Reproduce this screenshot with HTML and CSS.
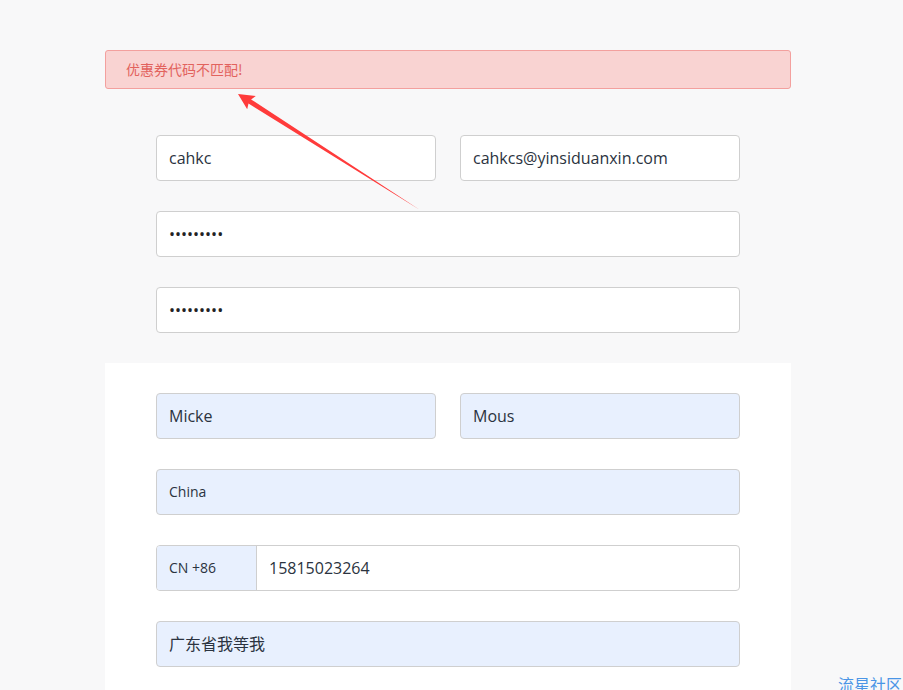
FILE: index.html
```html
<!DOCTYPE html>
<html lang="zh">
<head>
<meta charset="utf-8">
<title>Register</title>
<link rel="stylesheet" href="styles.css">
</head>
<body>
<div class="wrap">
  <div class="alert">优惠券代码不匹配!</div>
  <div class="section top">
    <div class="row two">
      <div class="field">cahkc</div>
      <div class="field">cahkcs@yinsiduanxin.com</div>
    </div>
    <div class="row"><div class="field pw">•••••••••</div></div>
    <div class="row"><div class="field pw">•••••••••</div></div>
  </div>
  <div class="section panel">
    <div class="row two">
      <div class="field fill">Micke</div>
      <div class="field fill">Mous</div>
    </div>
    <div class="row"><div class="field fill small">China</div></div>
    <div class="row">
      <div class="field phone">
        <span class="prefix">CN +86</span>
        <span class="num">15815023264</span>
      </div>
    </div>
    <div class="row"><div class="field fill">广东省我等我</div></div>
  </div>
</div>
<svg class="arrow" width="903" height="690" viewBox="0 0 903 690">
  <polygon points="238,94 255.8,95.9 251.1,99.4 420,210 248.5,103.6 247.2,109.3" fill="#ff3b3b"/>
</svg>
<div class="watermark">流星社区</div>
</body>
</html>
```
FILE: styles.css
```css
html, body {
  margin: 0;
  padding: 0;
  height: 100%;
  overflow: hidden;
}
body {
  background: #f8f8f9;
  font-family: "Open Sans", "Noto Sans CJK SC", sans-serif;
  color: #2b3340;
}
.wrap {
  width: 686px;
  margin-left: 105px;
  padding-top: 50px;
}
.alert {
  box-sizing: border-box;
  height: 39px;
  background: #f9d3d2;
  border: 1px solid #f3a09e;
  border-radius: 3px;
  color: #e2625d;
  font-size: 14px;
  line-height: 37px;
  padding-left: 20px;
  font-family: "Noto Sans CJK SC", sans-serif;
}
.section {
  display: flex;
  flex-direction: column;
  gap: 30px;
  padding: 0 51px;
}
.top {
  padding-top: 46px;
  padding-bottom: 30px;
}
.panel {
  background: #fff;
  padding-top: 30px;
  padding-bottom: 40px;
}
.row {
  display: flex;
  gap: 24px;
}
.row.two .field {
  flex: 1;
}
.field {
  box-sizing: border-box;
  flex: 1;
  height: 46px;
  border: 1px solid #cfcfcf;
  border-radius: 4px;
  background: #fff;
  padding-left: 12px;
  font-size: 16px;
  line-height: 44px;
  white-space: nowrap;
  overflow: hidden;
}
.field.fill {
  background: #e8f0fe;
}
.field.small {
  font-size: 14px;
}
.field.pw {
  font-size: 16px;
  letter-spacing: 0;
  color: #222;
}
.field.phone {
  display: flex;
  padding-left: 0;
}
.prefix {
  width: 100px;
  box-sizing: border-box;
  padding-left: 12px;
  background: #e8f0fe;
  border-right: 1px solid #cfcfcf;
  font-size: 14px;
}
.num {
  padding-left: 12px;
}
.arrow {
  position: absolute;
  left: 0;
  top: 0;
  pointer-events: none;
}
.watermark {
  position: absolute;
  left: 838px;
  top: 672px;
  font-size: 16px;
  color: #4a95e6;
  white-space: nowrap;
  font-family: "Noto Sans CJK SC", sans-serif;
}
```
